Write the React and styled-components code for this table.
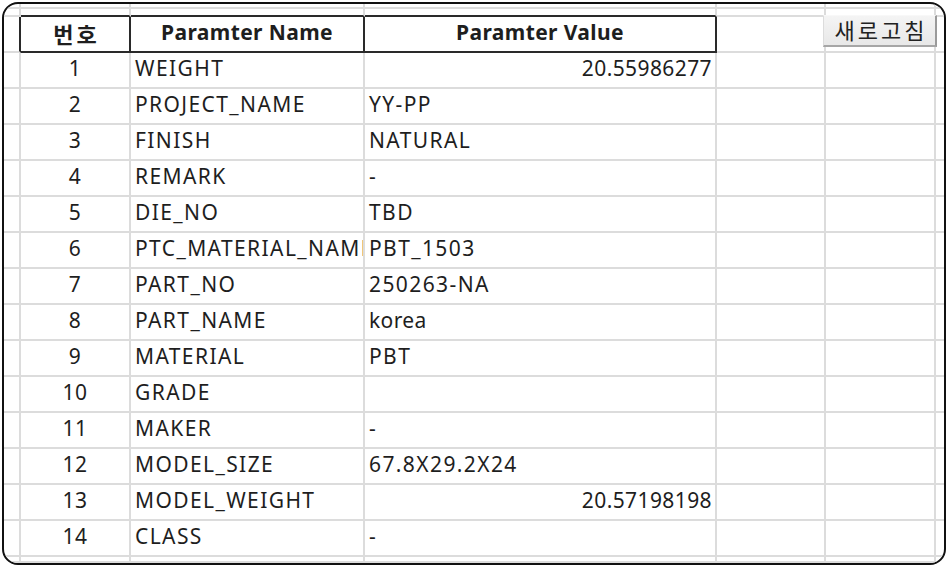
import React from 'react';
import styled, { createGlobalStyle } from 'styled-components';

const Global = createGlobalStyle`
  html, body { margin: 0; padding: 0; background: #fff; }
  body { font-family: "Noto Sans", "Noto Sans CJK KR", sans-serif; }
`;

const Page = styled.div`
  width: 948px;
  height: 567px;
  padding: 2px;
  box-sizing: border-box;
`;

const Frame = styled.div`
  position: relative;
  width: 944px;
  height: 563px;
  box-sizing: border-box;
  border: 2px solid #111;
  border-radius: 16px;
  overflow: hidden;
  background: #fff;
`;

const Sheet = styled.div`
  display: grid;
  grid-template-columns: 17px 110px 234px 352px 109px 110px 1fr;
  grid-template-rows: 3px 10px 36px repeat(14, 36px) 1fr;
  height: 100%;
`;

const GRID = '#dcdcdc';
const INK = '#2a2a2a';

const Cell = styled.div`
  box-sizing: border-box;
  min-width: 0;
  border-right: 2px solid ${p => (p.$right ? INK : GRID)};
  border-bottom: 2px solid ${p => (p.$bottom ? INK : GRID)};
  overflow: hidden;
  white-space: nowrap;
  display: flex;
  align-items: center;
  justify-content: ${p =>
    p.$align === 'center' ? 'center' : p.$align === 'right' ? 'flex-end' : 'flex-start'};
  padding: 0 ${p => (p.$align === 'right' ? '3px' : '4px')} 3px 4px;
  font-size: 21px;
  letter-spacing: ${p => (p.$caps ? '1.4px' : '0.4px')};
  line-height: 1;
  color: #1e1e1e;
  font-weight: ${p => (p.$bold ? 700 : 400)};
`;

const Hangul = styled.span`
  font-family: "Noto Sans CJK KR", sans-serif;
  font-size: 22px;
  letter-spacing: 3px;
  margin-right: -3px;
`;

const RefreshButton = styled.button`
  position: absolute;
  left: 819px;
  top: 11px;
  width: 114px;
  height: 32px;
  box-sizing: border-box;
  padding: 0 0 3px 3px;
  background: linear-gradient(#f4f4f4, #e8e8e8);
  border-top: 1px solid #f8f8f8;
  border-left: 1px solid #dcdcdc;
  border-right: 2px solid #9a9a9a;
  border-bottom: 2px solid #a6a6a6;
  font-family: "Noto Sans CJK KR", sans-serif;
  font-size: 22px;
  line-height: 1;
  color: #222;
  letter-spacing: 3px;
`;

const rows = [
  ['1', 'WEIGHT', '20.55986277', true],
  ['2', 'PROJECT_NAME', 'YY-PP'],
  ['3', 'FINISH', 'NATURAL'],
  ['4', 'REMARK', '-'],
  ['5', 'DIE_NO', 'TBD'],
  ['6', 'PTC_MATERIAL_NAME', 'PBT_1503'],
  ['7', 'PART_NO', '250263-NA'],
  ['8', 'PART_NAME', 'korea'],
  ['9', 'MATERIAL', 'PBT'],
  ['10', 'GRADE', ''],
  ['11', 'MAKER', '-'],
  ['12', 'MODEL_SIZE', '67.8X29.2X24'],
  ['13', 'MODEL_WEIGHT', '20.57198198', true],
  ['14', 'CLASS', '-'],
];

const isCaps = s => /^[A-Z0-9_.\-]+$/.test(s) && /[A-Z]/.test(s);

const blankRow = (key, opts = {}) =>
  Array.from({ length: 7 }, (_, i) => (
    <Cell key={`${key}-${i}`} $bottom={opts.inkBottom && i >= 1 && i <= 3} />
  ));

export default function App() {
  return (
    <>
      <Global />
      <Page>
        <Frame>
          <Sheet>
            {blankRow('r0')}
            {blankRow('r1', { inkBottom: true })}
            <Cell $right />
            <Cell $right $bottom $bold $align="center">
              <Hangul>번호</Hangul>
            </Cell>
            <Cell $right $bottom $bold $align="center">Paramter Name</Cell>
            <Cell $right $bottom $bold $align="center">Paramter Value</Cell>
            <Cell />
            <Cell />
            <Cell />
            {rows.map(([n, name, value, numeric]) => (
              <React.Fragment key={n}>
                <Cell />
                <Cell $align="center">{n}</Cell>
                <Cell $caps={isCaps(name)}>{name}</Cell>
                <Cell $caps={isCaps(value)} $align={numeric ? 'right' : 'left'}>
                  {value}
                </Cell>
                <Cell />
                <Cell />
                <Cell />
              </React.Fragment>
            ))}
            {blankRow('last')}
          </Sheet>
          <RefreshButton>새로고침</RefreshButton>
        </Frame>
      </Page>
    </>
  );
}
